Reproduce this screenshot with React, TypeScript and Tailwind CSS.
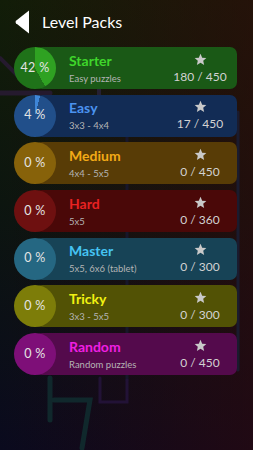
import React from 'react';

type Pack = {
    name: string;
    sub: string;
    pct: number;
    done: number;
    total: number;
    card: string;
    circle: string;
    fill: string;
    title: string;
};

const packs: Pack[] = [
    { name: 'Starter', sub: 'Easy puzzles', pct: 42, done: 180, total: 450, card: 'bg-[#1a5916]', circle: '#1f7219', fill: '#2fa222', title: 'text-[#3fd62b]' },
    { name: 'Easy', sub: '3x3 - 4x4', pct: 4, done: 17, total: 450, card: 'bg-[#122c55]', circle: '#214f8a', fill: '#3f86d8', title: 'text-[#4b93ef]' },
    { name: 'Medium', sub: '4x4 - 5x5', pct: 0, done: 0, total: 450, card: 'bg-[#583c06]', circle: '#87620a', fill: '#87620a', title: 'text-[#f2aa17]' },
    { name: 'Hard', sub: '5x5', pct: 0, done: 0, total: 360, card: 'bg-[#4a0808]', circle: '#6e1010', fill: '#6e1010', title: 'text-[#e82222]' },
    { name: 'Master', sub: '5x5, 6x6 (tablet)', pct: 0, done: 0, total: 300, card: 'bg-[#174356]', circle: '#256782', fill: '#256782', title: 'text-[#45c3f3]' },
    { name: 'Tricky', sub: '3x3 - 5x5', pct: 0, done: 0, total: 300, card: 'bg-[#525205]', circle: '#7d7d09', fill: '#7d7d09', title: 'text-[#f2f212]' },
    { name: 'Random', sub: 'Random puzzles', pct: 0, done: 0, total: 450, card: 'bg-[#540a4c]', circle: '#7e0f78', fill: '#7e0f78', title: 'text-[#f01fe2]' },
];

const Star = () => (
    <svg width="13" height="13" viewBox="0 0 24 24" className="text-[#c9c9c9]" fill="currentColor">
        <path d="M12 1.5l3.1 7.1 7.7.7-5.8 5.1 1.7 7.6L12 18l-6.7 4 1.7-7.6L1.2 9.3l7.7-.7z" />
    </svg>
);

const PackRow = ({ p }: { p: Pack }) => (
    <div className={`flex items-center h-[42px] ml-[35px] mr-[16px] rounded-[7px] ${p.card}`}>
        <div
            className="-ml-[21px] w-[42px] min-w-[42px] h-[42px] shrink-0 rounded-full flex items-center justify-center"
            style={{ background: `conic-gradient(${p.fill} 0 ${p.pct}%, ${p.circle} ${p.pct}% 100%)` }}
        >
            <span className="text-[12.5px] text-[#e4e4e4] tracking-[0.3px]">{p.pct} %</span>
        </div>
        <div className="flex-1 pl-[13px] flex flex-col justify-center">
            <div className={`text-[14px] font-bold leading-[18px] ${p.title}`}>{p.name}</div>
            <div className="text-[9.5px] leading-[12px] mt-[3px] text-[#b4b4b4]">{p.sub}</div>
        </div>
        <div className="w-[56px] mr-[9px] flex flex-col items-center">
            <Star />
            <div className="text-[12px] leading-[14px] mt-[4px] text-[#d2d2d2] whitespace-nowrap">
                {p.done} / {p.total}
            </div>
        </div>
    </div>
);

const App = () => {
    return (
        <div className="relative w-[253px] h-[450px] overflow-hidden font-['Lato',sans-serif] bg-[linear-gradient(to_right,rgba(0,0,0,0),rgba(55,8,10,0.5)),linear-gradient(to_bottom,#121d08,#0c150f_45%,#0a0a1e)]">
            <svg className="absolute inset-0" width="253" height="450" fill="none" strokeLinecap="round">
                <path d="M0 93 H50" stroke="#251a2e" strokeWidth="5" />
                <path d="M0 58 L20 78" stroke="#251a2e" strokeWidth="4" />
                <path d="M99 88 V98" stroke="#252033" strokeWidth="4" />
                <path d="M238 112 V370" stroke="#1a1b2e" strokeWidth="3" />
                <path d="M127 135 V380" stroke="#17162a" strokeWidth="3" />
                <path d="M50 378 V420 M54 400 H90 L82 448" stroke="#10282c" strokeWidth="5" />
                <path d="M100 378 V402 H127 V380" stroke="#221236" strokeWidth="3" />
            </svg>
            <div className="relative">
                <div className="flex items-center h-[44px] pl-[15px]">
                    <svg width="15" height="24" viewBox="0 0 15 24">
                        <path d="M14 0.5 V23.5 L1 13.2 Q0 12 1 10.8 Z" fill="#ffffff" />
                    </svg>
                    <span className="ml-[12px] text-[16px] text-white">Level Packs</span>
                </div>
                <div className="mt-[3px] flex flex-col gap-[5.7px]">
                    {packs.map((p) => (
                        <PackRow key={p.name} p={p} />
                    ))}
                </div>
            </div>
        </div>
    );
};

export default App;
